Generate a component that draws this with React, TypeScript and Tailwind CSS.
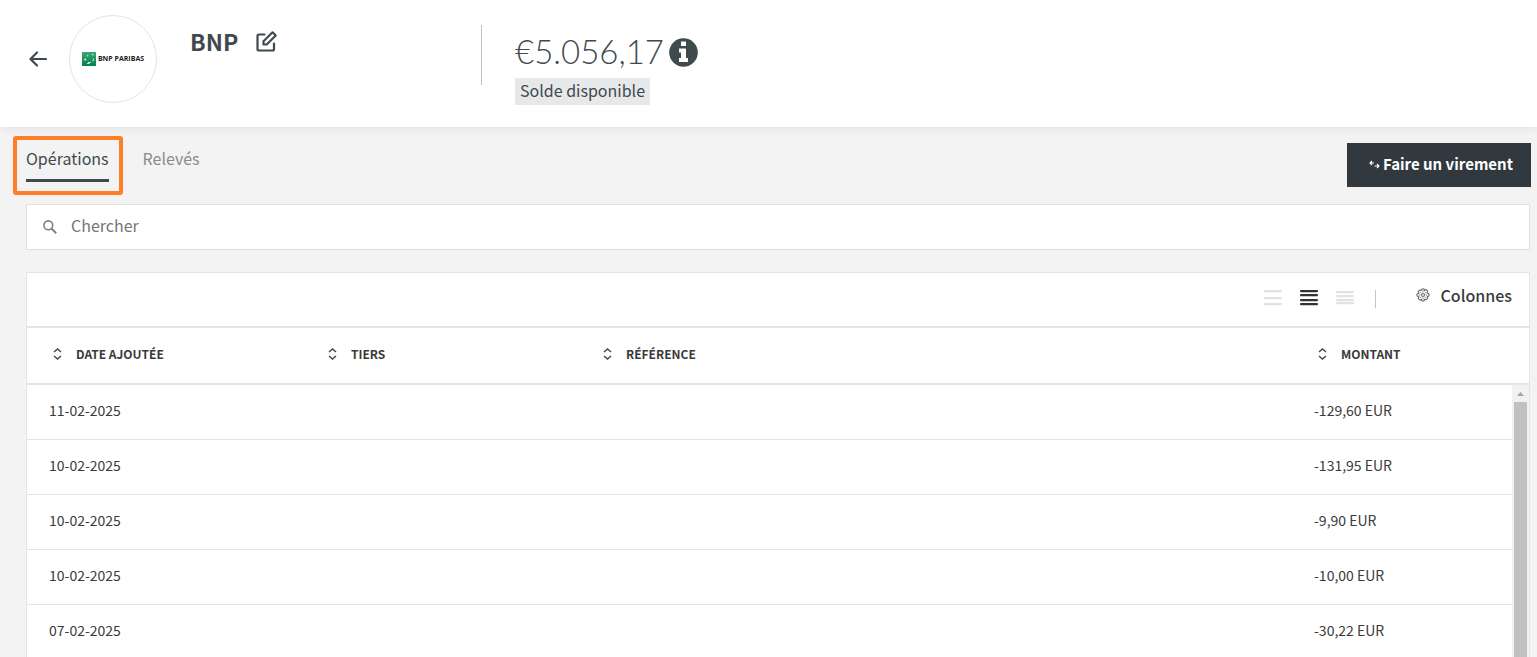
import { useState } from "react";

interface Operation {
  id: number;
  date: string;
  amount: string;
}

const OPERATIONS: Operation[] = [
  { id: 1, date: "11-02-2025", amount: "-129,60 EUR" },
  { id: 2, date: "10-02-2025", amount: "-131,95 EUR" },
  { id: 3, date: "10-02-2025", amount: "-9,90 EUR" },
  { id: 4, date: "10-02-2025", amount: "-10,00 EUR" },
  { id: 5, date: "07-02-2025", amount: "-30,22 EUR" },
];

const COLUMNS = [
  { label: "Date ajoutée", width: "w-[275px]" },
  { label: "Tiers", width: "w-[275px]" },
  { label: "Référence", width: "w-auto" },
  { label: "Montant", width: "w-[237px]" },
];

const DENSITIES = [
  { id: "large", label: "Affichage large", lines: [1, 8, 14] },
  { id: "normal", label: "Affichage normal", lines: [1, 5, 10, 14] },
  { id: "compact", label: "Affichage compact", lines: [2, 6, 10, 13] },
];

export default function App() {
  const [search, setSearch] = useState("");
  const [density, setDensity] = useState("normal");

  return (
    <div className="flex h-screen flex-col overflow-hidden bg-[#f3f3f3] font-['Noto_Sans_CJK_JP',sans-serif] text-[#3f4a4f]">
      <AccountHeader />

      <main className="flex min-h-0 flex-1 flex-col pl-[26px] pr-[7px]">
        <div className="flex h-[77px] shrink-0 items-start justify-between">
          <Tabs />
          <button className="-mr-px mt-4 flex h-11 items-center gap-[3px] bg-[#31393f] pb-[2px] pl-[22px] pr-[18px] text-[15px] font-bold text-white">
            <TransferIcon />
            Faire un virement
          </button>
        </div>

        <label className="flex h-[46px] shrink-0 items-center gap-[14px] border border-[#e0e0e0] bg-white pl-4">
          <SearchIcon />
          <input
            type="text"
            value={search}
            onChange={(e) => setSearch(e.target.value)}
            placeholder="Chercher"
            aria-label="Chercher"
            className="min-w-0 flex-1 pb-1 text-base leading-6 outline-none placeholder:text-[#757575]"
          />
        </label>

        <section className="mt-[22px] min-h-0 flex-1 overflow-hidden border border-b-0 border-[#e5e5e5] bg-white">
          <div className="flex h-[53px] items-start justify-end pr-[17px] pt-[11px]">
            <div className="mt-[5px] flex gap-[18px]">
              {DENSITIES.map((d) => (
                <button
                  key={d.id}
                  aria-label={d.label}
                  onClick={() => setDensity(d.id)}
                  className={density === d.id ? "text-[#333333]" : "text-[#e2e2e2]"}
                >
                  <LinesIcon lines={d.lines} />
                </button>
              ))}
            </div>
            <span className="ml-[21px] mt-[6px] h-[18px] w-px bg-[#c4c4c4]" />
            <button className="ml-10 flex items-center gap-[11px] text-base font-medium leading-[22px] text-[#3a3a3a]">
              <GearIcon />
              Colonnes
            </button>
          </div>
          <OperationTable />
        </section>
      </main>
    </div>
  );
}

function AccountHeader() {
  return (
    <header className="relative flex h-[127px] shrink-0 items-start bg-white pl-[29px] shadow-[0_0_10px_rgba(0,0,0,0.1)]">
      <button aria-label="Retour" className="mt-[50px]">
        <svg width="18" height="18" viewBox="0 0 18 18" fill="none" stroke="currentColor" strokeWidth="2.200" strokeLinecap="round" strokeLinejoin="round">
          <path d="M17 9H1.500M8 2.500L1.500 9L8 15.500" />
        </svg>
      </button>
      <div className="ml-[22px] mt-[15px] flex size-[88px] items-center justify-center gap-[2px] rounded-full border border-[#e3e3e3]">
        <BankLogo />
      </div>
      <div className="ml-[33px] mt-[25px] flex w-[291px] items-center gap-[18px]">
        <h1 className="text-[23px] font-bold leading-8">BNP</h1>
        <button aria-label="Modifier">
          <EditIcon />
        </button>
      </div>
      <div className="mt-[25px] h-[60px] w-px bg-[#c0c0c0]" />
      <div className="ml-[33px] mt-[30px] flex flex-col items-start">
        <div className="flex items-center gap-[5px]">
          <span className="pb-[2px] font-['Lato',sans-serif] text-[33px] font-light leading-[42px]">€5.056,17</span>
          <InfoIcon />
        </div>
        <span className="mt-1 bg-[#e6e8e9] px-[5px] pb-[2px] text-base leading-[25px]">Solde disponible</span>
      </div>
    </header>
  );
}

function Tabs() {
  return (
    <nav className="-ml-[13px] mt-[9px] flex items-start">
      <a
        href="#operations"
        className="h-[59px] rounded-[3px] border-4 border-[#ff7f27] pl-[9px] pr-[10px] pt-[7px] text-base leading-[22px]"
      >
        <span className="block h-[35px] border-b-[3px] border-[#3f4a4f]">Opérations</span>
      </a>
      <a href="#releves" className="ml-5 mt-[11px] text-base leading-[22px] text-[#8b8b8b]">
        Relevés
      </a>
    </nav>
  );
}

function OperationTable() {
  return (
    <div className="relative border-t-2 border-[#e5e5e5]">
      <table className="w-full table-fixed border-separate border-spacing-0 text-left text-[#3a3a3a]">
        <thead>
          <tr className="h-[57px]">
            {COLUMNS.map((col) => (
              <th key={col.label} className={`${col.width} border-b-2 border-[#e5e5e5] p-0 pb-[3px] pl-[26px]`}>
                <button className="flex items-center gap-[14px] text-xs font-bold uppercase leading-4">
                  <SortIcon />
                  {col.label}
                </button>
              </th>
            ))}
          </tr>
        </thead>
        <tbody className="text-sm leading-5">
          {OPERATIONS.map((op) => (
            <tr key={op.id} className="h-[55px] *:border-b *:border-[#e5e5e5]">
              <td className="p-0 pb-1 pl-[22px]">{op.date}</td>
              <td />
              <td />
              <td className="p-0 pb-1 pl-[22px]">{op.amount}</td>
            </tr>
          ))}
        </tbody>
      </table>

      {/* scrollbar over the rows */}
      <div aria-hidden="true" className="absolute bottom-0 right-0 top-[57px] flex w-[17px] flex-col items-center bg-[#f1f1f1]">
        <svg className="mb-[6px] mt-[7px] shrink-0" width="7" height="4" viewBox="0 0 7 4" fill="#a3a3a3">
          <path d="M0 4L3.500 0L7 4z" />
        </svg>
        <div className="w-[13px] flex-1 bg-[#c1c1c1]" />
      </div>
    </div>
  );
}

function BankLogo() {
  return (
    <>
      <svg width="14" height="14" viewBox="0 0 13 13">
        <defs>
          <linearGradient id="bank" x1="0" y1="0" x2="0" y2="1">
            <stop offset="0" stopColor="#3aa876" />
            <stop offset="1" stopColor="#078049" />
          </linearGradient>
        </defs>
        <rect width="13" height="13" fill="url(#bank)" />
        <path d="M2 6.500l1.500-.5.500 1.500-1.500.5zM4.500 3l1.500.3-1 1zM9 2.300l1.500-.5v1.700zM10.500 5.500l.5 2.200-1.500 1.300zM4 10.800l2.500-1.500 2 .2-2 1.300z" fill="#fff" />
      </svg>
      <span className="font-['Open_Sans',sans-serif] text-[7px] font-bold leading-3 text-[#222222]">BNP PARIBAS</span>
    </>
  );
}

function EditIcon() {
  return (
    <svg width="21" height="21" viewBox="0 0 21 21" fill="none" stroke="currentColor" strokeWidth="2.200" strokeLinejoin="round" strokeLinecap="round">
      <path d="M8.500 3.500H3a1.500 1.500 0 0 0-1.500 1.500v13A1.500 1.500 0 0 0 3 19.500h13.500A1.500 1.500 0 0 0 18 18v-5.500" />
      <path d="M7.500 13.500v-3.300L16.500 1.300l3.200 3.200-9 9z" />
    </svg>
  );
}

function InfoIcon() {
  return (
    <svg width="29" height="29" viewBox="0 0 29 29" role="img" aria-label="Information">
      <circle cx="14.500" cy="14.500" r="14.300" fill="currentColor" />
      <path d="M12 3.500h5v4.500h-5zM10 10.500h7V20h2v4h-9v-4h2v-5.500h-2z" fill="#fff" />
    </svg>
  );
}

function TransferIcon() {
  return (
    <svg width="11" height="9" viewBox="0 0 11 9" fill="none" stroke="currentColor" strokeWidth="1.100">
      <path d="M5 3H1M3 1L1 3l2 2M5.500 6H10M8 4l2 2-2 2" />
    </svg>
  );
}

function SearchIcon() {
  return (
    <svg width="14" height="14" viewBox="0 0 14 14" fill="none" stroke="#808080" strokeWidth="1.600">
      <circle cx="5.300" cy="5.300" r="4.400" />
      <path d="M8.500 8.500L13.200 13.200" strokeWidth="2" />
    </svg>
  );
}

function LinesIcon({ lines }: { lines: number[] }) {
  return (
    <svg width="18" height="18" viewBox="0 0 18 18" fill="currentColor">
      {lines.map((y) => (
        <rect key={y} y={y} width="18" height="2.300" rx="1" />
      ))}
    </svg>
  );
}

function GearIcon() {
  return (
    <svg width="14" height="14" viewBox="0 0 14 14" fill="none" stroke="#707070" strokeWidth="1.200">
      <path d="M5.500 2.300Q5.500.8 7 .8t1.500 1.500Q9.600 1.200 10.900 2.300t.3 2.600Q13.200 5.500 13.200 7t-1.800 1.700q1 1.400-.3 2.400t-2.600.3Q8.500 13.200 7 13.200t-1.500-1.700q-1.300 1-2.500-.2t-.3-2.500Q.8 8.500.8 7t1.800-1.700q-1-1.300.3-2.500t2.600-.5z" />
      <path d="M7 2.500v2M7 9.500v2M2.500 7h2M9.500 7h2M4 4l1.200 1.200M8.800 8.800L10 10M10 4L8.800 5.200M5.200 8.800L4 10" strokeWidth=".8" />
      <circle cx="7" cy="7" r="1.500" />
    </svg>
  );
}

function SortIcon() {
  return (
    <svg width="9" height="12" viewBox="0 0 9 12" fill="none" stroke="#3f4a4f" strokeWidth="1.500">
      <path d="M1 4l3.500-3L8 4M1 8l3.500 3L8 8" />
    </svg>
  );
}
